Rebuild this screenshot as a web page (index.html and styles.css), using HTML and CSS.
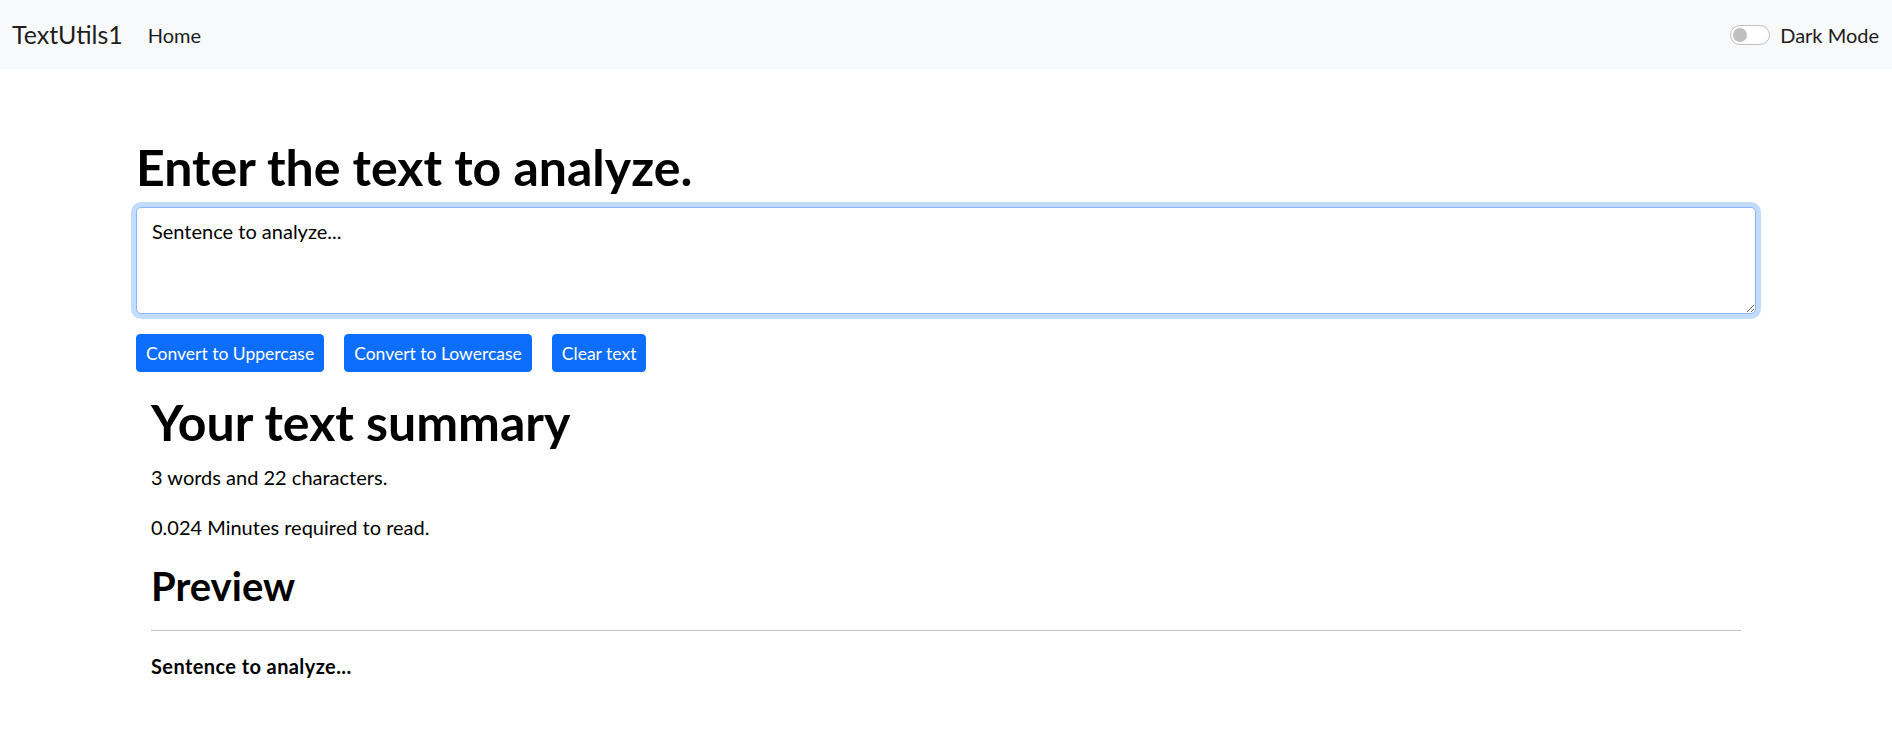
FILE: index.html
```html
<!DOCTYPE html>
<html lang="en">
<head>
<meta charset="utf-8">
<title>TextUtils1</title>
<link rel="stylesheet" href="styles.css">
</head>
<body>
<nav class="navbar">
  <div class="nav-left">
    <a class="brand" href="#">TextUtils1</a>
    <a class="nav-link" href="#">Home</a>
  </div>
  <div class="switch-wrap">
    <span class="switch"><span class="knob"></span></span>
    <label class="switch-label">Dark Mode</label>
  </div>
</nav>

<main class="container">
  <h1 class="title">Enter the text to analyze.</h1>
  <div class="field">
    <textarea class="textbox" rows="3">Sentence to analyze...</textarea>
  </div>
  <div class="actions">
    <button class="btn">Convert to Uppercase</button>
    <button class="btn">Convert to Lowercase</button>
    <button class="btn">Clear text</button>
  </div>

  <section class="summary">
    <h1 class="title">Your text summary</h1>
    <p>3 words and 22 characters.</p>
    <p>0.024 Minutes required to read.</p>
    <h2 class="subtitle">Preview</h2>
    <hr class="rule">
    <p><b class="preview-text">Sentence to analyze...</b></p>
  </section>
</main>
</body>
</html>
```

FILE: styles.css
```css
html, body {
  margin: 0;
  padding: 0;
}
body {
  font-family: Lato, "Open Sans", sans-serif;
  font-size: 20px;
  line-height: 1.5;
  color: #000;
  background: #fff;
}

.navbar {
  height: 69px;
  background: #f8f9fa;
  display: flex;
  align-items: center;
  justify-content: space-between;
  padding: 0 13px 0 12px;
}
.nav-left {
  display: flex;
  align-items: center;
}
.brand {
  font-size: 25px;
  color: rgba(0, 0, 0, 0.9);
  text-decoration: none;
  margin-right: 25px;
}
.nav-link {
  font-size: 20px;
  color: #1c1c1c;
  text-decoration: none;
}
.switch-wrap {
  display: flex;
  align-items: center;
  gap: 10px;
}
.switch {
  width: 40px;
  height: 20px;
  box-sizing: border-box;
  border: 1px solid #bfbfbf;
  border-radius: 10px;
  background: #fff;
  display: flex;
  align-items: center;
  padding-left: 2px;
}
.knob {
  width: 14px;
  height: 14px;
  border-radius: 50%;
  background: #bfbfbf;
}
.switch-label {
  font-size: 20px;
  color: #1c1c1c;
}

.container {
  max-width: 1620px;
  margin: 0 auto;
  padding: 68px 15px 0;
}
.title {
  font-size: 50px;
  font-weight: 700;
  line-height: 1.2;
  margin: 0 0 10px;
}
.field {
  margin-bottom: 20px;
}
.textbox {
  display: block;
  width: 100%;
  box-sizing: border-box;
  height: 107px;
  padding: 7.5px 15px;
  font-family: inherit;
  font-size: 20px;
  line-height: 1.5;
  color: #000;
  border: 1px solid #86b7fe;
  border-radius: 5px;
  box-shadow: 0 0 0 5px #c2dbfe;
  outline: none;
  resize: vertical;
}
.actions {
  display: flex;
  gap: 20px;
}
.btn {
  height: 38px;
  padding: 0 9px;
  font-family: inherit;
  font-size: 17.5px;
  color: #fff;
  background: #0d6efd;
  border: 1px solid #0d6efd;
  border-radius: 4px;
}
.summary {
  padding: 0 15px;
  margin-top: 20px;
}
.summary p {
  margin: 0 0 20px;
}
.subtitle {
  font-size: 40px;
  font-weight: 700;
  line-height: 1.2;
  margin: 0 0 10px;
}
.rule {
  margin: 20px 0;
  border: 0;
  border-top: 1px solid #bfbfbf;
  height: 0;
}
.preview-text {
  letter-spacing: 0.4px;
}
```
